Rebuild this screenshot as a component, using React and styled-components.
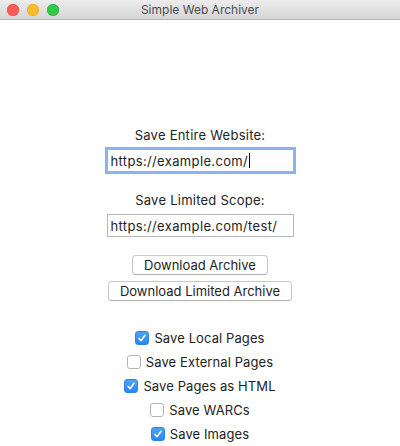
import React from "react";
import styled, { createGlobalStyle } from "styled-components";

const Global = createGlobalStyle`
  html, body { margin: 0; padding: 0; background: #fff; }
  body {
    font-family: Inter, Roboto, "Liberation Sans", sans-serif;
    font-size: 13px;
    color: #232323;
  }
`;

const Window = styled.div`
  width: 400px;
  height: 446px;
  overflow: hidden;
  display: flex;
  flex-direction: column;
  background: #fff;
`;

const TitleBar = styled.div`
  height: 19px;
  flex: none;
  display: flex;
  align-items: center;
  position: relative;
  background: linear-gradient(#ececec, #d6d6d6);
  border-bottom: 1px solid #b4b4b4;
`;

const Lights = styled.div`
  display: flex;
  gap: 8px;
  padding-left: 7px;
`;

const Light = styled.span`
  width: 12px;
  height: 12px;
  border-radius: 50%;
  background: ${p => p.color};
  box-shadow: inset 0 0 0 0.5px ${p => p.edge};
`;

const Title = styled.div`
  position: absolute;
  left: 0;
  right: 0;
  text-align: center;
  color: #4c4c4c;
  font-size: 12px;
  pointer-events: none;
`;

const Content = styled.div`
  display: flex;
  flex-direction: column;
  align-items: center;
  padding-top: 107px;
`;

const Label = styled.div`
  line-height: 16px;
  letter-spacing: 0.25px;
  margin-top: ${p => p.top || 0}px;
`;

const Field = styled.div`
  margin-top: 6px;
  width: 187px;
  height: 23px;
  box-sizing: border-box;
  border: 1px solid ${p => (p.focused ? "#8fb3e8" : "#b9b9b9")};
  box-shadow: ${p => (p.focused ? "0 0 0 2px #88b3f0" : "none")};
  padding: 0 3px;
  display: flex;
  align-items: center;
  white-space: nowrap;
  letter-spacing: 0.35px;
  background: #fff;
`;

const Caret = styled.span`
  display: inline-block;
  width: 1px;
  height: 15px;
  background: #000;
  margin-left: 1px;
`;

const Buttons = styled.div`
  margin-top: 18px;
  display: flex;
  flex-direction: column;
  align-items: center;
  gap: 6px;
`;

const Button = styled.button`
  font: inherit;
  color: #232323;
  height: 20px;
  padding: 0 11px;
  background: #fff;
  border: 1px solid #c8c8c8;
  border-bottom-color: #b2b2b2;
  border-radius: 4px;
  box-shadow: 0 0.5px 0 rgba(0, 0, 0, 0.05);
  line-height: 18px;
`;

const Checks = styled.div`
  margin-top: 25px;
  display: flex;
  flex-direction: column;
  align-items: center;
`;

const CheckRow = styled.label`
  height: 24px;
  display: flex;
  align-items: center;
  gap: 5px;
  letter-spacing: 0.1px;
`;

const Box = styled.span`
  width: 14px;
  height: 14px;
  box-sizing: border-box;
  border-radius: 3px;
  display: flex;
  align-items: center;
  justify-content: center;
  background: ${p => (p.checked ? "linear-gradient(#4ea4fb, #2a86f5)" : "#fff")};
  border: 1px solid ${p => (p.checked ? "#2c82ea" : "#b4b4b4")};
`;

const Check = ({ checked }) => (
  <Box checked={checked}>
    {checked && (
      <svg width="10" height="10" viewBox="0 0 10 10">
        <path d="M2 5.3 L4.1 7.6 L8 2.3" fill="none" stroke="#fff" strokeWidth="1.6" strokeLinecap="round" strokeLinejoin="round" />
      </svg>
    )}
  </Box>
);

const options = [
  ["Save Local Pages", true],
  ["Save External Pages", false],
  ["Save Pages as HTML", true],
  ["Save WARCs", false],
  ["Save Images", true],
];

export default function App() {
  return (
    <Window>
      <Global />
      <TitleBar>
        <Lights>
          <Light color="#fc5b57" edge="#e2463f" />
          <Light color="#fdbc2e" edge="#e1a116" />
          <Light color="#33c748" edge="#27aa35" />
        </Lights>
        <Title>Simple Web Archiver</Title>
      </TitleBar>
      <Content>
        <Label>Save Entire Website:</Label>
        <Field focused>
          https://example.com/
          <Caret />
        </Field>
        <Label top={20}>Save Limited Scope:</Label>
        <Field>https://example.com/test/</Field>
        <Buttons>
          <Button>Download Archive</Button>
          <Button>Download Limited Archive</Button>
        </Buttons>
        <Checks>
          {options.map(([text, checked]) => (
            <CheckRow key={text}>
              <Check checked={checked} />
              {text}
            </CheckRow>
          ))}
        </Checks>
      </Content>
    </Window>
  );
}
